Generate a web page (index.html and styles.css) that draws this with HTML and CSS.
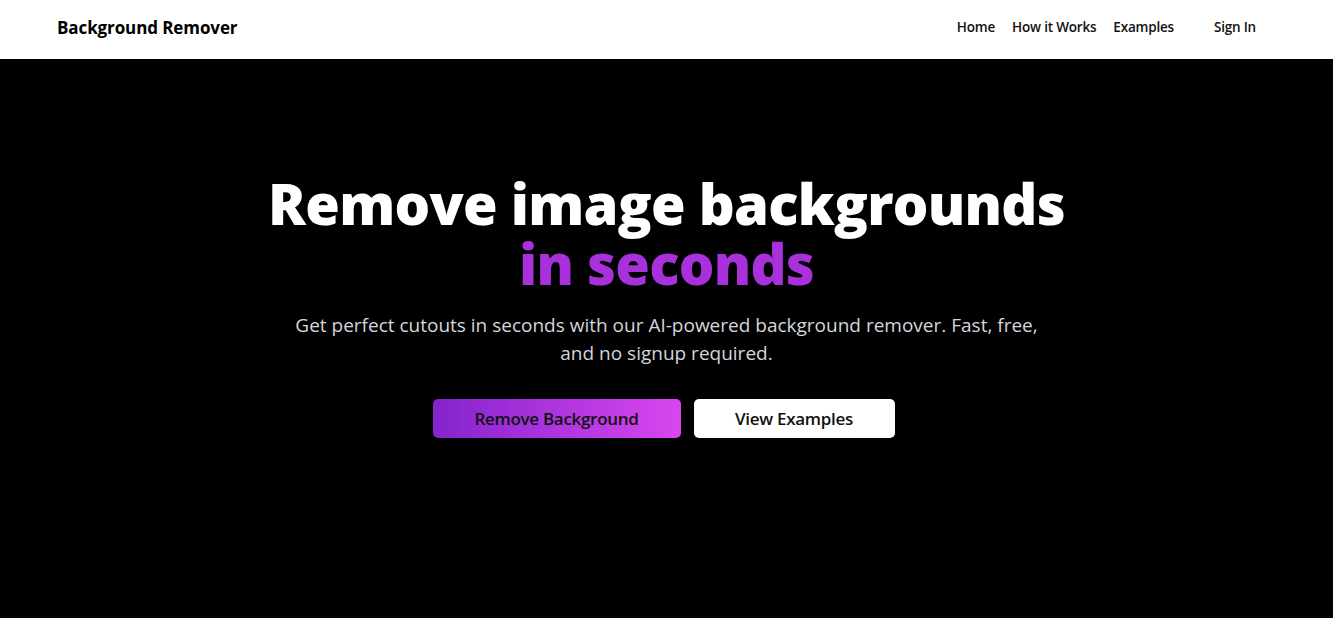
FILE: index.html
```html
<!DOCTYPE html>
<html lang="en">
<head>
<meta charset="utf-8">
<title>Background Remover</title>
<link rel="stylesheet" href="styles.css">
</head>
<body>
<header class="header">
  <div class="brand">Background Remover</div>
  <nav class="nav">
    <a class="nav-link" href="#">Home</a>
    <a class="nav-link" href="#">How it Works</a>
    <a class="nav-link" href="#">Examples</a>
    <a class="nav-link signin" href="#">Sign In</a>
  </nav>
</header>
<main class="hero">
  <h1 class="title"><span class="line">Remove image backgrounds</span><span class="line accent">in seconds</span></h1>
  <p class="lead">Get perfect cutouts in seconds with our AI-powered background remover. Fast, free, and no signup required.</p>
  <div class="actions">
    <button class="btn btn-primary">Remove Background</button>
    <button class="btn btn-secondary">View Examples</button>
  </div>
</main>
</body>
</html>
```
FILE: styles.css
```css
* { box-sizing: border-box; }
html, body { margin: 0; padding: 0; height: 100%; }
body {
  font-family: "Open Sans", "Noto Sans", sans-serif;
  background: #000;
}
.header {
  height: 59px;
  background: #fff;
  display: flex;
  align-items: center;
  justify-content: space-between;
  padding: 0 61px 5px 57px;
}
.brand {
  font-size: 17px;
  font-weight: 700;
  color: #000;
  letter-spacing: -0.1px;
}
.nav { display: flex; align-items: center; gap: 17px; }
.nav-link {
  font-size: 13.5px;
  font-weight: 600;
  color: #111;
  text-decoration: none;
  letter-spacing: -0.2px;
}
.signin { margin-left: 7px; padding: 0 16px; }
.hero {
  display: flex;
  flex-direction: column;
  align-items: center;
  text-align: center;
  padding-top: 114px;
  height: calc(100% - 59px);
}
.title {
  margin: 0;
  font-size: 56px;
  line-height: 60px;
  font-weight: 800;
  color: #fff;
  letter-spacing: -0.7px;
}
.line { display: block; height: 60px; }
.accent { color: #a931dc; }
.lead {
  margin: 18px 0 0;
  max-width: 780px;
  font-size: 19px;
  line-height: 28px;
  color: #d4d6dc;
  letter-spacing: 0;
}
.actions { display: flex; gap: 13px; margin-top: 32px; margin-right: 6px; }
.btn {
  font-family: inherit;
  font-size: 17px;
  font-weight: 600;
  height: 39px;
  border: none;
  border-radius: 5px;
  color: #111;
  letter-spacing: -0.3px;
  cursor: pointer;
}
.btn-primary {
  width: 248px;
  background: linear-gradient(90deg, #8424cc, #d946ef);
}
.btn-secondary { width: 201px; background: #fff; }
```
